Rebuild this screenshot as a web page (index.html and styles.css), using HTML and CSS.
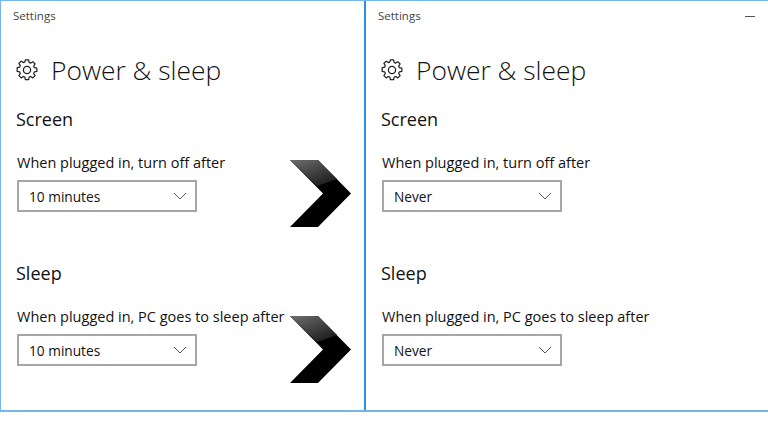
FILE: index.html
```html
<!DOCTYPE html>
<html lang="en">
<head>
    <meta charset="UTF-8">
    <meta name="viewport" content="width=device-width, initial-scale=1.0">
    <title>Settings - Power &amp; sleep</title>
    <link rel="stylesheet" href="styles.css">
</head>
<body>
    <div class="screens">
        <div class="window window-left">
            <div class="titlebar">Settings</div>
            <h1 class="page-title">
                <svg class="gear" viewBox="0 0 22 22" width="22" height="22">
                    <path d="M9.3 1.500h3.400l.5 2.600 1.700.7 2.200-1.500 2.400 2.400-1.500 2.200.7 1.700 2.600.5v3.400l-2.600.5-.7 1.700 1.500 2.200-2.400 2.400-2.200-1.500-1.700.7-.5 2.600H9.300l-.5-2.600-1.700-.7-2.200 1.500-2.400-2.400 1.500-2.200-.7-1.700-2.600-.5V9.600l2.600-.5.7-1.700-1.500-2.200 2.400-2.400 2.200 1.500 1.700-.7z" transform="translate(.5 -.5) scale(.955)"/>
                    <circle cx="11" cy="11" r="3.600"/>
                </svg>
                Power &amp; sleep
            </h1>
            <h2 class="section-title">Screen</h2>
            <div class="field-label">When plugged in, turn off after</div>
            <div class="dropdown">
                <span>10 minutes</span>
                <svg class="caret" viewBox="0 0 14 8" width="14" height="8"><path d="M1 1l6 6 6-6"/></svg>
            </div>
            <h2 class="section-title sleep-title">Sleep</h2>
            <div class="field-label">When plugged in, PC goes to sleep after</div>
            <div class="dropdown">
                <span>10 minutes</span>
                <svg class="caret" viewBox="0 0 14 8" width="14" height="8"><path d="M1 1l6 6 6-6"/></svg>
            </div>
        </div>
        <div class="window window-right">
            <div class="titlebar">Settings<span class="minimize"></span></div>
            <h1 class="page-title">
                <svg class="gear" viewBox="0 0 22 22" width="22" height="22">
                    <path d="M9.3 1.500h3.400l.5 2.600 1.700.7 2.200-1.500 2.400 2.400-1.500 2.200.7 1.700 2.600.5v3.400l-2.600.5-.7 1.700 1.500 2.200-2.400 2.400-2.200-1.500-1.700.7-.5 2.600H9.300l-.5-2.600-1.700-.7-2.200 1.500-2.400-2.400 1.500-2.200-.7-1.700-2.600-.5V9.600l2.600-.5.7-1.700-1.500-2.200 2.400-2.400 2.200 1.500 1.700-.7z" transform="translate(.5 -.5) scale(.955)"/>
                    <circle cx="11" cy="11" r="3.600"/>
                </svg>
                Power &amp; sleep
            </h1>
            <h2 class="section-title">Screen</h2>
            <div class="field-label">When plugged in, turn off after</div>
            <div class="dropdown">
                <span>Never</span>
                <svg class="caret" viewBox="0 0 14 8" width="14" height="8"><path d="M1 1l6 6 6-6"/></svg>
            </div>
            <h2 class="section-title sleep-title">Sleep</h2>
            <div class="field-label">When plugged in, PC goes to sleep after</div>
            <div class="dropdown">
                <span>Never</span>
                <svg class="caret" viewBox="0 0 14 8" width="14" height="8"><path d="M1 1l6 6 6-6"/></svg>
            </div>
        </div>

        <!-- arrows sit on top of the left window -->
        <svg class="arrow arrow-top" viewBox="0 0 62 68" width="62" height="68">
            <defs>
                <linearGradient id="gloss" x1="0" y1="0" x2="0.75" y2="1">
                    <stop offset="0" stop-color="#6e6e6e"/>
                    <stop offset="1" stop-color="#1c1c1c"/>
                </linearGradient>
            </defs>
            <path d="M0 0h28l33 33.500L28 67H0l33-33.500z" fill="#000"/>
            <path d="M0 0h28l19 19-20 7z" fill="url(#gloss)"/>
        </svg>
        <svg class="arrow arrow-bottom" viewBox="0 0 62 68" width="62" height="68">
            <path d="M0 0h28l33 33.500L28 67H0l33-33.500z" fill="#000"/>
            <path d="M0 0h28l19 19-20 7z" fill="url(#gloss)"/>
        </svg>
    </div>
</body>
</html>
```
FILE: styles.css
```css
body {
    font-family: "Open Sans", "Noto Sans", sans-serif;
    margin: 0;
    padding: 0;
    background-color: white;
    color: #111;
    overflow: hidden;
}
.screens {
    position: relative;
    display: flex;
    width: 768px;
    height: 412px;
    border-top: 1px solid #74b6ee;
    border-bottom: 2px solid #74b6ee;
    box-sizing: border-box;
}
.window {
    box-sizing: border-box;
}
.window-left {
    border-left: 1px solid #74b6ee;
    padding-left: 15px;
    width: 364px;
}
.window-right {
    width: 404px;
    padding-left: 15px;
    border-left: 2px solid #2e8fe0;
}
.titlebar {
    position: relative;
    font-size: 11.500px;
    line-height: 16px;
    padding-top: 7px;
    margin-left: -3px;
    color: #444;
}
.minimize {
    position: absolute;
    right: 13px;
    top: 15px;
    width: 10px;
    height: 1px;
    background-color: #555;
}
.page-title {
    display: flex;
    align-items: center;
    gap: 13px;
    margin: 26px 0 0;
    font-size: 26.400px;
    font-weight: 300;
    line-height: 40px;
}
.gear {
    fill: none;
    stroke: #222;
    stroke-width: 1.300;
    stroke-linejoin: round;
}
.section-title {
    margin: 16px 0 0;
    font-size: 18px;
    font-weight: 400;
    line-height: 26px;
}
.sleep-title {
    margin-top: 48px;
}
.field-label {
    margin: 21px 0 0 1px;
    font-size: 14.500px;
    line-height: 20px;
}
.dropdown {
    display: flex;
    justify-content: space-between;
    align-items: center;
    width: 180px;
    height: 32px;
    margin: 7px 0 0 1px;
    padding: 0 8px 0 10px;
    border: 2px solid #a6a6a6;
    box-sizing: border-box;
    font-size: 13.700px;
}
.caret {
    fill: none;
    stroke: #555;
    stroke-width: 1;
}
.arrow {
    position: absolute;
    left: 290px;
}
.arrow-top {
    top: 159px;
}
.arrow-bottom {
    top: 315px;
}
```
